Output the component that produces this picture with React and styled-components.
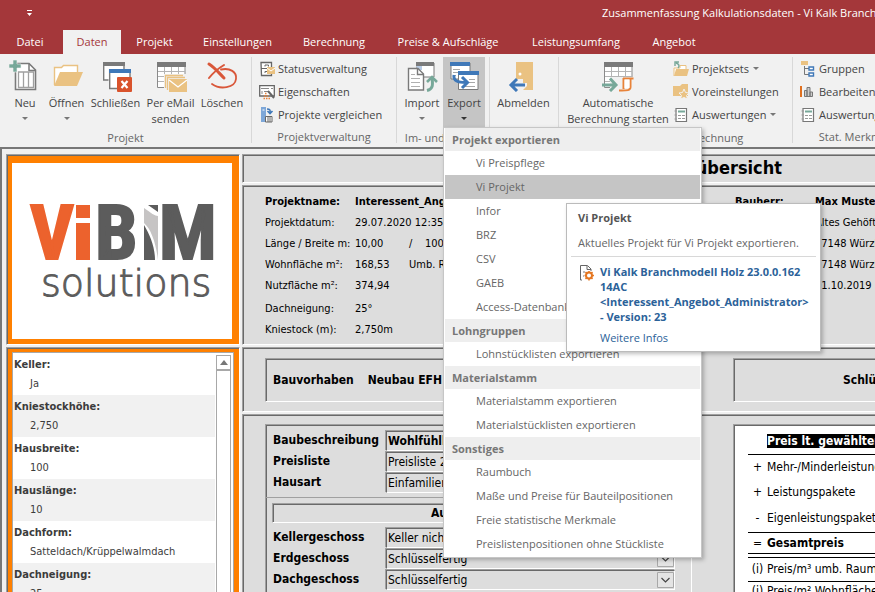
import React from 'react';
import styled, { createGlobalStyle, ThemeProvider } from 'styled-components';

const theme = {
	fonts: {
		ui: '"Open Sans", "Noto Sans", sans-serif',
		form: '"DejaVu Sans Condensed", "DejaVu Sans", sans-serif',
	},
	colors: {
		brand: '#a4373a',
		ribbon: '#f1f1f1',
		form: '#dddddd',
		orange: '#ff8000',
		text: '#444444',
		muted: '#666666',
		line: '#d8d8d8',
		hover: '#c5c5c5',
		link: '#2b6299',
		gray: '#7a7a7a',
		blue: '#3f78b8',
		sand: '#eac282',
		green: '#77a899',
	},
};

const { gray, blue, sand, green } = theme.colors;

const GlobalStyle = createGlobalStyle`
	* {
		box-sizing: border-box;
	}

	body {
		margin: 0;
	}

	button,
	input,
	select {
		font: inherit;
		color: inherit;
		margin: 0;
	}
`;

const Window = styled.div`
	display: flex;
	flex-direction: column;
	height: 100vh;
	overflow: hidden;
	font-family: ${(props) => props.theme.fonts.ui};
	font-size: 11px;
	line-height: 16px;
	color: ${(props) => props.theme.colors.text};
	background: #f0f0f0;
	white-space: nowrap;
`;

/* title bar and tabs */

const TitleBar = styled.header`
	display: flex;
	flex: none;
	align-items: center;
	height: 30px;
	padding: 0 0 4px 22px;
	color: #fff;
	background: ${(props) => props.theme.colors.brand};
`;

const QuickAccess = styled.button`
	display: flex;
	flex: none;
	width: 16px;
	padding: 4px;
	border: 0;
	background: none;
`;

const Title = styled.h1`
	margin: 0 0 0 564px;
	font-size: 11px;
	font-weight: 400;
`;

const Tabs = styled.nav`
	display: flex;
	flex: none;
	height: 24px;
	padding-left: 3px;
	background: ${(props) => props.theme.colors.brand};
`;

const Tab = styled.button`
	flex: none;
	width: ${(props) => props.$width}px;
	padding: 0;
	border: 0;
	color: ${(props) => (props.$active ? props.theme.colors.brand : '#fff')};
	background: ${(props) => (props.$active ? props.theme.colors.ribbon : 'none')};

	&:first-child {
		margin-right: 6px;
	}
`;

/* ribbon */

const Ribbon = styled.div`
	display: flex;
	flex: none;
	height: 93px;
	padding-top: 3px;
	background: ${(props) => props.theme.colors.ribbon};
`;

const Group = styled.section`
	display: flex;
	flex: none;
	flex-direction: column;
	width: ${(props) => props.$width}px;
	height: 86px;
	border-right: 1px solid ${(props) => props.theme.colors.line};
`;

const GroupBody = styled.div`
	display: flex;
	height: 70px;
	padding-left: ${(props) => props.$indent || 0}px;
`;

const Caption = styled.div`
	padding-top: 3px;
	text-align: center;
	color: ${(props) => props.theme.colors.muted};
`;

const BigButton = styled.button`
	display: flex;
	flex: none;
	flex-direction: column;
	align-items: center;
	width: ${(props) => props.$width}px;
	height: 70px;
	padding: 3px 0 0;
	border: 0;
	background: ${(props) => (props.$open ? props.theme.colors.hover : 'none')};

	svg {
		flex: none;
		margin-bottom: 3px;
	}
`;

const Caret = styled.span`
	width: 0;
	margin: ${(props) => (props.$inline ? '0 0 0 1px' : '6px 0 0')};
	border: 3px solid transparent;
	border-top-color: ${(props) => (props.$dark ? '#333' : '#777')};
	border-bottom: 0;
`;

const SmallColumn = styled.div`
	display: flex;
	flex-direction: column;
`;

const SmallButton = styled.button`
	display: flex;
	align-items: center;
	gap: 3px;
	height: 23px;
	padding: 0;
	border: 0;
	background: none;
`;

const MenuAnchor = styled.div`
	position: relative;
`;

const Menu = styled.div`
	position: absolute;
	z-index: 10;
	top: 70px;
	left: 0;
	width: 259px;
	padding: 0 1px 1px;
	border: 1px solid #c6c6c6;
	background: #fff;
	box-shadow: 2px 2px 4px rgba(0, 0, 0, 0.25);
`;

const MenuHeading = styled.div`
	height: 23px;
	padding-left: 7px;
	line-height: 23px;
	font-weight: 700;
	color: #777;
	background: #eee;
`;

const MenuItem = styled.button`
	display: block;
	width: 100%;
	height: 24px;
	padding: 0 0 0 31px;
	border: 0;
	text-align: left;
	color: ${(props) => props.theme.colors.muted};
	background: ${(props) => (props.$active ? props.theme.colors.hover : 'none')};
`;

const Tooltip = styled.div`
	position: absolute;
	z-index: 11;
	top: 75px;
	left: 122px;
	width: 255px;
	height: 149px;
	padding: 6px 4px;
	border: 1px solid #bbb;
	background: #fff;
	box-shadow: 2px 2px 4px rgba(0, 0, 0, 0.25);
	color: ${(props) => props.theme.colors.muted};
`;

const TooltipTitle = styled.strong`
	display: block;
	padding-left: 7px;
	color: #555;
`;

const TooltipText = styled.p`
	margin: 0;
	padding: 9px 0 5px 7px;
	border-bottom: 1px solid ${(props) => props.theme.colors.line};
`;

const TooltipSource = styled.div`
	display: flex;
	gap: 5px;
	padding: 7px 0 6px 7px;
	line-height: 15px;
	font-weight: 700;
	color: ${(props) => props.theme.colors.link};

	svg {
		flex: none;
	}
`;

const TooltipLink = styled.a`
	margin-left: 29px;
	color: ${(props) => props.theme.colors.link};
	text-decoration: none;
`;

/* form */

const Workspace = styled.main`
	display: flex;
	flex: 1;
	gap: 2px;
	min-width: 1160px;
	min-height: 0;
	padding: 5px 0 0 4px;
	border-top: 2px solid #777;
	border-left: 2px solid #777;
	font-family: ${(props) => props.theme.fonts.form};
	font-size: 12px;
	color: #000;
`;

const Column = styled.div`
	display: flex;
	flex: ${(props) => (props.$width ? 'none' : '1')};
	flex-direction: column;
	gap: 2px;
	width: ${(props) => (props.$width ? `${props.$width}px` : 'auto')};
`;

const Frame = styled.section`
	flex: ${(props) => (props.$fill ? '1 0 auto' : 'none')};
	border: 1px solid;
	border-color: #a0a0a0 #fff #fff #a0a0a0;
	background: ${(props) => props.theme.colors.form};
	box-shadow: inset 1px 1px #696969;
`;

const LogoFrame = styled(Frame)`
	height: 191px;
	padding: 8px 6px 5px 5px;
	background: ${(props) => props.theme.colors.orange};
	background-clip: padding-box;

	svg {
		display: block;
		background: #fff;
	}
`;

const ListFrame = styled(Frame)`
	height: 400px;
	padding: 4px 5px 0;
	background: ${(props) => props.theme.colors.orange};
`;

const ListBox = styled.div`
	display: flex;
	height: 100%;
	border: 1px solid #a8a8a8;
	background: #fff;
`;

const Facts = styled.dl`
	flex: 1;
	margin: 0;
	color: #3c3c3c;
`;

const Fact = styled.div`
	height: 42px;
	padding: 2px 1px;
	line-height: 19px;
	font-size: 11px;

	&:nth-child(even) {
		background: #f1f1f1;
	}

	dt {
		font-weight: 700;
	}

	dd {
		margin: 0 0 0 16px;
	}
`;

const ScrollTrack = styled.div`
	width: 15px;
	margin: 2px 2px 0 1px;
	border: 1px solid #a8a8a8;
`;

const ScrollUp = styled.button`
	display: flex;
	align-items: center;
	justify-content: center;
	width: 13px;
	height: 15px;
	padding: 0;
	border: 0;
	border-bottom: 2px solid #a8a8a8;
	background: #fff;
`;

const Headline = styled.h2`
	width: 539px;
	height: 27px;
	margin: 0;
	line-height: 26px;
	font-size: 18px;
	text-align: right;
`;

const ProjectInfo = styled(Frame)`
	display: grid;
	grid-template-columns: 470px 1fr;
	height: 160px;
	padding: 5px 0 0 22px;
`;

const InfoRows = styled.dl`
	margin: 0;
`;

const InfoRow = styled.div`
	display: grid;
	grid-template-columns: ${(props) => props.$label || 90}px 54px 1fr;
	margin-top: ${(props) => (props.$spaced ? 2 : 0)}px;
	line-height: 21px;
	font-size: 11px;
	font-weight: ${(props) => (props.$strong ? 700 : 400)};

	dd {
		margin: 0;
		white-space: pre;
	}
`;

const Split = styled(Frame)`
	display: grid;
	grid-template-columns: 427px 1fr;
	gap: 41px;
	padding: ${(props) => (props.$fill ? '9px 0 0 22px' : '10px 0 9px 22px')};
`;

const Banner = styled(Frame)`
	display: flex;
	align-items: center;
	gap: ${(props) => props.$gap || 0}px;
	height: 44px;
	padding-left: ${(props) => props.$indent || 7}px;
	font-weight: 700;
`;

const Details = styled(Frame)`
	padding-top: 5px;
`;

const Field = styled.div`
	display: grid;
	grid-template-columns: 113px 289px;
	align-items: center;
	height: 21px;
	margin: 0 7px;
`;

const FieldLabel = styled.label`
	font-weight: 700;
	line-height: 18px;
	padding-bottom: 2px;
`;

const fieldBox = (props) => `
	width: 100%;
	height: 20px;
	padding: 0 1px;
	border: 1px solid;
	border-color: #696969 #fff #fff #696969;
	border-radius: 0;
	outline: 0;
	background: ${props.theme.colors.form};
	box-shadow: -1px -1px #a0a0a0;
	font-size: 12px;
	font-weight: ${props.$strong ? 700 : 400};
`;

const TextField = styled.input`
	${fieldBox}
`;

const SelectBox = styled.div`
	display: grid;
	grid-template-columns: 1fr 18px;
	align-items: center;

	> * {
		grid-row: 1;
	}

	select {
		grid-column: 1 / 3;
	}

	svg {
		grid-column: 2;
		pointer-events: none;
	}
`;

const Select = styled.select`
	${fieldBox}
	appearance: none;
`;

const Rule = styled.hr`
	height: 1px;
	margin: 4px 0 5px;
	border: 0;
	background: #a0a0a0;
`;

const SubHeading = styled(Frame)`
	height: 20px;
	margin: 0 14px 4px 6px;
	padding-left: 158px;
	line-height: 18px;
	font-weight: 700;
`;

const PriceSheet = styled(Frame)`
	padding: 4px 0 0 14px;
	background: #fff;
`;

const PriceTable = styled.table`
	width: 100%;
	border-collapse: collapse;

	td {
		width: 19px;
		height: 25px;
		padding: 0;
		text-align: center;
	}

	th {
		padding: 0;
		text-align: left;
		font-weight: 400;
	}
`;

const PriceRow = styled.tr`
	border-bottom: ${(props) => (props.$line ? '1px solid #000' : '0')};

	&& th {
		font-weight: ${(props) => (props.$strong ? 700 : 400)};
	}

	&& td {
		height: ${(props) => props.$height || 25}px;
	}
`;

const Marked = styled.span`
	color: #fff;
	background: #000;
`;

/* icons */

const Icon = ({ size = 32, children }) => (
	<svg width={size} height={size} viewBox={`0 0 ${size} ${size}`} fill="none" aria-hidden="true">
		{children}
	</svg>
);

const NewIcon = () => (
	<Icon>
		<path d="M6.500 3.500H20L26.500 10V29.500H6.500Z" fill="#fff" stroke={gray} strokeWidth="1.6" />
		<path d="M20 3.500V10.500H26.500" stroke={gray} strokeWidth="1.500" />
		<path d="M9.500 12H24.500V27.500H9.500ZM14.500 12V27.500M19.500 12V27.500" stroke="#a0a0a0" strokeWidth="1.3" />
		<path d="M4 0H8V4H12V8H8V12H4V8H0V4H4Z" fill={green} stroke="#f1f1f1" strokeWidth=".6" />
	</Icon>
);

const OpenIcon = () => (
	<Icon>
		<path d="M3.500 25V7.500H10.500L12.500 5.500H26.500V14" fill="#fff" stroke={sand} strokeWidth="1.400" />
		<path d="M9 12H32L26 26H3Z" fill={sand} />
	</Icon>
);

const CloseIcon = () => (
	<Icon>
		<path d="M3.700 3V20H24V3" fill="#fff" stroke={gray} strokeWidth="1.400" />
		<path d="M3 2H25V6H3Z" fill={gray} />
		<path d="M8.500 9H31V29H8.500Z" fill="#f1f1f1" />
		<path d="M9.700 10V28.500H30V10" fill="#fff" stroke={gray} strokeWidth="1.400" />
		<path d="M9 9H31V13H9Z" fill={blue} />
		<rect x="17" y="17" width="15" height="15" rx="1" fill="#d9532c" />
		<path d="M21.500 21L27.500 28M27.500 21L21.500 28" stroke="#fff" strokeWidth="2.200" />
	</Icon>
);

const Sheet = () => (
	<>
		<path d="M2.500 5V27.500H30V5" fill="#fff" stroke="#8a8a8a" />
		<path d="M9.500 6V27M16.500 6V27M23.500 6V27M3 11.500H30M3 16.500H30M3 21.500H30" stroke="#b4b4b4" />
		<path d="M2 2H31V7H2Z" fill={gray} />
	</>
);

const MailIcon = () => (
	<Icon>
		<Sheet />
		<path d="M9 14H32V32H13V29H9Z" fill="#f1f1f1" />
		<path d="M10.500 28V15.500H28M12.500 30V17.500H30" stroke={sand} strokeWidth="1.300" />
		<path d="M14 19H32V32H14Z" fill={sand} />
		<path d="M14 20L23 27L32 20" stroke="#fff" strokeWidth="1.300" />
	</Icon>
);

const DeleteIcon = () => (
	<Icon>
		<path d="M3 4C8 7 13 13 18 18" stroke="#d9573a" strokeWidth="3" strokeLinecap="round" />
		<path d="M18 5C13 8 7 13 3 18" stroke="#d9573a" strokeWidth="2" strokeLinecap="round" />
		<path d="M15 9.500C24 7.500 31 12 30 19C29 28 14 30 6 24" stroke="#d9573a" strokeWidth="1.800" strokeLinecap="round" />
	</Icon>
);

const ImportIcon = () => (
	<Icon>
		<path d="M11 3H28V17H11Z" fill="#fff" stroke={gray} />
		<path d="M10 2H28V6H10Z" fill={gray} />
		<path d="M10 6H16V10H13Z" fill="#b8cbe4" />
		<path d="M2.500 8.500H12L17.500 14V30H2.500Z" fill="#fff" stroke={gray} strokeWidth="1.400" />
		<path d="M11.500 8.500V14.500H17.500" stroke={gray} strokeWidth="1.400" />
		<path d="M5 14.500H9M5 18.500H14M5 22.500H14M5 26.500H14" stroke="#b0b0b0" />
		<path d="M21 30.500C27 29 27 25 26 18" stroke={green} strokeWidth="3" />
		<path d="M21 22L26 17L31 22" stroke={green} strokeWidth="2.600" />
	</Icon>
);

const ExportIcon = () => (
	<Icon>
		<path d="M3 3H22V19H3Z" fill="#fff" stroke={gray} />
		<path d="M2 2H22V6H2Z" fill={blue} />
		<path d="M5 9.500H12M5 12.500H12M5 15.500H8" stroke="#a8a8a8" />
		<path d="M10.500 12V29.500H30V12" fill="#fff" stroke={gray} />
		<path d="M10 11H31V15H10Z" fill={blue} />
		<path d="M21 19.500H27M21 22.500H27M14 26.500H27" stroke="#a8a8a8" />
		<path d="M6 15C5 21 10 22.500 18 22.500" stroke={blue} strokeWidth="3" />
		<path d="M14 17L19.500 22.500L14 28" stroke={blue} strokeWidth="3" />
	</Icon>
);

const LogoutIcon = () => (
	<Icon>
		<path d="M8 2H25V30H15L19 26V23H15V19H8Z" fill={sand} />
		<circle cx="12" cy="14" r="1.500" fill="#fff" />
		<path d="M17 25H3M9 19L3 25L9 31" stroke={blue} strokeWidth="3" />
	</Icon>
);

const CalcIcon = () => (
	<Icon>
		<Sheet />
		<path d="M8 17H32V32H8Z" fill="#f1f1f1" />
		<path d="M0 25H13M8 18.500L14 25L8 31" stroke={green} strokeWidth="3" />
		<path d="M21 18.500H31.500M21.500 18V29M28.500 19V27C28.500 31 24 30.500 17 30.500" stroke="#e8833a" strokeWidth="2" />
		<path d="M22.500 19.500H27.500V28H22.500Z" fill="#fff" />
	</Icon>
);

const StatusIcon = () => (
	<Icon size={16}>
		<path d="M2 1.500H12.500V14.500H2.500Z" fill="#fff" stroke="#666" strokeWidth="1.300" />
		<path d="M2 7.500H13M6 5.500V4H9.500V5.500M6 12V10.500H9.500V12" stroke="#666" />
		<path d="M8 6H16V13H8Z" fill={sand} />
		<path d="M8 7L12 10L16 7" stroke="#fff" />
	</Icon>
);

const PropertiesIcon = () => (
	<Icon size={16}>
		<path d="M.7 1.700H15.300V12H.7Z" fill="#fff" stroke="#666" strokeWidth="1.300" />
		<path d="M2 4.500H10M12 4.500H14M3 7V10M5 7.500H9" stroke="#888" />
		<path d="M9 7L15 14" stroke="#666" strokeWidth="2" />
		<path d="M6 9.500H8M5 12H10M4.500 14.500H11" stroke="#e8833a" strokeWidth="1.500" strokeDasharray="1.500 1" />
	</Icon>
);

const CompareIcon = () => (
	<Icon size={16}>
		<path d="M2 0H7V15H2Z" fill="#7da7d8" />
		<path d="M3.500 3H5.500" stroke="#fff" />
		<path d="M8 2C12 2 11 4 11 6M8.500 4L11 6.500L13.500 4" stroke={blue} strokeWidth="1.600" />
		<path d="M6.500 9.500H13V15H6.500ZM9 10V15M11 10V15" fill="#fff" stroke="#666" />
	</Icon>
);

const SetsIcon = () => (
	<Icon size={16}>
		<path d="M1 15V7H7V4.500H13V8" fill="#fff" stroke={sand} />
		<path d="M3 8H16L14 15H1Z" fill={sand} />
		<path d="M5 7C7 5 6 3 3 2M6 1H2V5" stroke={green} strokeWidth="1.400" />
	</Icon>
);

const PresetIcon = () => (
	<Icon size={16}>
		<path d="M0 2H7L9 0H15V12H0Z" fill={sand} />
		<path d="M11 5L12.500 8.500L16 9L13.500 11.500L14.500 15L11 13.500L7.500 15L8.500 11.500L6 9L9.500 8.500Z" fill={sand} stroke="#f1f1f1" />
	</Icon>
);

const ReportIcon = () => (
	<Icon size={16}>
		<path d="M3 1.500H13.500V14.500H3Z" fill="#fff" stroke="#777" strokeWidth="1.200" />
		<path d="M5 4.500H12" stroke={green} strokeWidth="2" />
		<path d="M5 8.500H8M9 8.500H12M5 11.500H8M9 11.500H12M1.500 4H4M1.500 8H4M1.500 12H4" stroke="#999" />
	</Icon>
);

const GroupsIcon = () => (
	<Icon size={16}>
		<path d="M1 0H8V4H1Z" fill={sand} />
		<path d="M4.500 5V13.500H9M5 7.500H9" stroke="#777" />
		<path d="M9 6H13.500V9H9ZM9 12H13.500V15H9Z" fill="#fff" stroke={blue} strokeWidth="1.400" />
	</Icon>
);

const EditIcon = () => (
	<Icon size={16}>
		<path d="M1 2V13" stroke="#e07020" strokeWidth="2" />
		<path d="M4.500 6.500H7V12.500H4.500ZM7 3.500H10V12.500H7ZM10 8H12.500V12.500H10Z" fill="#ccc" stroke="#777" />
	</Icon>
);

const SourceIcon = () => (
	<Icon size={17}>
		<path d="M4 16H2.500V1.500H9.500L13 5V7M9 2V5.500H13" stroke="#666" />
		<path d="M5 8H7M5 12H6" stroke="#777" />
		<circle cx="11" cy="11.500" r="3" stroke="#e57722" strokeWidth="2" />
		<path d="M11 7V9M11 14V16.500M6.500 11.500H8M14 11.500H16M7.500 8L9 9.500M13 13.500L14.500 15M14.500 8L13 9.500M9 13.500L7.500 15" stroke="#e57722" strokeWidth="1.500" />
	</Icon>
);

const Chevron = () => (
	<svg width="17" height="16" viewBox="0 0 17 16" fill="none" aria-hidden="true">
		<path d="M.5 .5H16.500V15.500H.5Z" fill="#e4e4e4" stroke="#a8a8a8" />
		<path d="M4.500 6L8.500 10L12.500 6" stroke="#444" strokeWidth="1.200" />
	</svg>
);

const Logo = () => (
	<svg width="220" height="176" viewBox="0 0 220 176" role="img" aria-label="ViBIM solutions">
		<g fontFamily='"Roboto Condensed", Roboto, sans-serif' fontWeight="700" fontSize="76" strokeWidth="2">
			<text y="96" fill="#ec622d" stroke="#ec622d">
				<tspan x="18">V</tspan>
			</text>
			<text y="96" fill="#5c5c5c" stroke="#5c5c5c">
				<tspan x="83">B</tspan>
				<tspan x="147">M</tspan>
			</text>
		</g>
		<path d="M64 42H78V55H64ZM64 60H78V97H64Z" fill="#ec622d" />
		<path d="M132 45C139 50 143 53 146 53V97C144 80 139 66 132 60Z" fill="#c6c4c4" />
		<path d="M132 62C138 72 143 84 143 97H132ZM136 42H146V49Z" fill="#5c5c5c" />
		<text x="29" y="133" fill="#5c5c5c" stroke="#5c5c5c" strokeWidth="1" fontFamily='"DejaVu Sans Light", "DejaVu Sans", sans-serif' fontWeight="200" fontSize="38">
			solutions
		</text>
	</svg>
);

/* data */

const tabs = [
	['Datei', 54],
	['Daten', 58],
	['Projekt', 67],
	['Einstellungen', 99],
	['Berechnung', 94],
	['Preise & Aufschläge', 134],
	['Leistungsumfang', 122],
	['Angebot', 74],
];

const menu = [
	{ heading: 'Projekt exportieren', items: ['Vi Preispflege', 'Vi Projekt', 'Infor', 'BRZ', 'CSV', 'GAEB', 'Access-Datenbank'] },
	{ heading: 'Lohngruppen', items: ['Lohnstücklisten exportieren'] },
	{ heading: 'Materialstamm', items: ['Materialstamm exportieren', 'Materialstücklisten exportieren'] },
	{
		heading: 'Sonstiges',
		items: ['Raumbuch', 'Maße und Preise für Bauteilpositionen', 'Freie statistische Merkmale', 'Preislistenpositionen ohne Stückliste'],
	},
];

const facts = [
	['Keller:', 'Ja'],
	['Kniestockhöhe:', '2,750'],
	['Hausbreite:', '100'],
	['Hauslänge:', '10'],
	['Dachform:', 'Satteldach/Krüppelwalmdach'],
	['Dachneigung:', '25'],
];

const info = [
	{ label: 'Projektdatum:', value: '29.07.2020 12:35:10' },
	{ label: 'Länge / Breite m:', value: '10,00', extra: '/    100,00' },
	{ label: 'Wohnfläche m²:', value: '168,53', extra: 'Umb. Raum' },
	{ label: 'Nutzfläche m²:', value: '374,94' },
	{ label: 'Dachneigung:', value: '25°', spaced: true },
	{ label: 'Kniestock (m):', value: '2,750m' },
];

const client = ['Altes Gehöft 12', '97148 Würzburg', '97148 Würzburg', '01.10.2019'];

const floors = [
	['Kellergeschoss', 'Keller nicht ausgebaut'],
	['Erdgeschoss', 'Schlüsselfertig'],
	['Dachgeschoss', 'Schlüsselfertig'],
];

const prices = [
	{ sign: '+', label: 'Mehr-/Minderleistungen' },
	{ sign: '+', label: 'Leistungspakete' },
	{ sign: '-', label: 'Eigenleistungspakete', line: true, height: 28 },
	{ sign: '=', label: 'Gesamtpreis', strong: true, line: true, height: 21 },
	{ sign: '', label: '', line: true, height: 4 },
	{ sign: '(i)', label: 'Preis/m³ umb. Raum', line: true, height: 24 },
	{ sign: '(i)', label: 'Preis/m² Wohnfläche', line: true, height: 20 },
];

const ExportMenu = () => (
	<Menu role="menu">
		{menu.map((group) => (
			<React.Fragment key={group.heading}>
				<MenuHeading>{group.heading}</MenuHeading>
				{group.items.map((item) => (
					<MenuItem key={item} role="menuitem" $active={item === 'Vi Projekt'}>
						{item}
					</MenuItem>
				))}
			</React.Fragment>
		))}
		<Tooltip role="tooltip">
			<TooltipTitle>Vi Projekt</TooltipTitle>
			<TooltipText>Aktuelles Projekt für Vi Projekt exportieren.</TooltipText>
			<TooltipSource>
				<SourceIcon />
				<span>
					Vi Kalk Branchmodell Holz 23.0.0.162
					<br />
					14AC
					<br />
					&lt;Interessent_Angebot_Administrator&gt;
					<br />- Version: 23
				</span>
			</TooltipSource>
			<TooltipLink href="#infos">Weitere Infos</TooltipLink>
		</Tooltip>
	</Menu>
);

const RibbonBar = () => (
	<Ribbon>
		<Group $width={252}>
			<GroupBody $indent={5}>
				<BigButton $width={40}><NewIcon />Neu<Caret /></BigButton>
				<BigButton $width={43}><OpenIcon />Öffnen<Caret /></BigButton>
				<BigButton $width={55}><CloseIcon />Schließen</BigButton>
				<BigButton $width={55}><MailIcon />Per eMail<br />senden</BigButton>
				<BigButton $width={48}><DeleteIcon />Löschen</BigButton>
			</GroupBody>
			<Caption>Projekt</Caption>
		</Group>
		<Group $width={145}>
			<GroupBody $indent={7}>
				<SmallColumn>
					<SmallButton><StatusIcon />Statusverwaltung</SmallButton>
					<SmallButton><PropertiesIcon />Eigenschaften</SmallButton>
					<SmallButton><CompareIcon />Projekte vergleichen</SmallButton>
				</SmallColumn>
			</GroupBody>
			<Caption>Projektverwaltung</Caption>
		</Group>
		<Group $width={93}>
			<GroupBody $indent={4}>
				<BigButton $width={42}><ImportIcon />Import<Caret /></BigButton>
				<MenuAnchor>
					<BigButton $width={42} $open aria-expanded="true"><ExportIcon />Export<Caret $dark /></BigButton>
					<ExportMenu />
				</MenuAnchor>
			</GroupBody>
			<Caption>Im- und Export</Caption>
		</Group>
		<Group $width={69}>
			<BigButton $width={67}><LogoutIcon />Abmelden</BigButton>
		</Group>
		<Group $width={234}>
			<GroupBody $indent={4}>
				<BigButton $width={110}><CalcIcon />Automatische<br />Berechnung starten</BigButton>
				<SmallColumn>
					<SmallButton><SetsIcon />Projektsets<Caret $inline /></SmallButton>
					<SmallButton><PresetIcon />Voreinstellungen</SmallButton>
					<SmallButton><ReportIcon />Auswertungen<Caret $inline /></SmallButton>
				</SmallColumn>
			</GroupBody>
			<Caption>Automatische Berechnung</Caption>
		</Group>
		<Group $width={130}>
			<GroupBody $indent={7}>
				<SmallColumn>
					<SmallButton><GroupsIcon />Gruppen</SmallButton>
					<SmallButton><EditIcon />Bearbeiten</SmallButton>
					<SmallButton><ReportIcon />Auswertungen</SmallButton>
				</SmallColumn>
			</GroupBody>
			<Caption>Stat. Merkmale</Caption>
		</Group>
	</Ribbon>
);

const Sidebar = () => (
	<Column $width={234}>
		<LogoFrame>
			<Logo />
		</LogoFrame>
		<ListFrame>
			<ListBox>
				<Facts>
					{facts.map(([label, value]) => (
						<Fact key={label}>
							<dt>{label}</dt>
							<dd>{value}</dd>
						</Fact>
					))}
				</Facts>
				<ScrollTrack>
					<ScrollUp aria-label="Nach oben">
						<svg width="8" height="5" viewBox="0 0 8 5">
							<path d="M0 5L4 0L8 5Z" fill="#777" />
						</svg>
					</ScrollUp>
				</ScrollTrack>
			</ListBox>
		</ListFrame>
	</Column>
);

const ProjectForm = () => (
	<Column>
		<Frame>
			<Headline>Projektübersicht</Headline>
		</Frame>
		<ProjectInfo>
			<InfoRows>
				<InfoRow $strong>
					<dt>Projektname:</dt>
					<dd>Interessent_Angebot</dd>
				</InfoRow>
				{info.map((row) => (
					<InfoRow key={row.label} $spaced={row.spaced}>
						<dt>{row.label}</dt>
						<dd>{row.value}</dd>
						<dd>{row.extra}</dd>
					</InfoRow>
				))}
			</InfoRows>
			<InfoRows>
				<InfoRow $strong $label={80}>
					<dt>Bauherr:</dt>
					<dd>Max Mustermann</dd>
				</InfoRow>
				{client.map((line, index) => (
					<InfoRow key={index} $label={80}>
						<dt />
						<dd>{line}</dd>
					</InfoRow>
				))}
			</InfoRows>
		</ProjectInfo>
		<Split>
			<Banner $gap={14}>
				<span>Bauvorhaben</span>
				<span>Neubau EFH</span>
			</Banner>
			<Banner $indent={109}>Schlüsselfertig</Banner>
		</Split>
		<Split $fill>
			<Details>
				<Field>
					<FieldLabel htmlFor="description">Baubeschreibung</FieldLabel>
					<TextField id="description" $strong defaultValue="Wohlfühlhaus" />
				</Field>
				<Field>
					<FieldLabel htmlFor="pricelist">Preisliste</FieldLabel>
					<TextField id="pricelist" defaultValue="Preisliste 2020" />
				</Field>
				<Field>
					<FieldLabel htmlFor="housetype">Hausart</FieldLabel>
					<TextField id="housetype" defaultValue="Einfamilienhaus" />
				</Field>
				<Rule />
				<SubHeading>Ausbaustufe</SubHeading>
				{floors.map(([label, value]) => (
					<Field key={label}>
						<FieldLabel htmlFor={label}>{label}</FieldLabel>
						<SelectBox>
							<Select id={label}>
								<option>{value}</option>
							</Select>
							<Chevron />
						</SelectBox>
					</Field>
				))}
			</Details>
			<PriceSheet>
				<PriceTable>
					<tbody>
						<PriceRow $strong $line>
							<td />
							<th scope="row"><Marked>Preis lt. gewählter Ausstattung</Marked></th>
						</PriceRow>
						{prices.map((row, index) => (
							<PriceRow key={index} $strong={row.strong} $line={row.line} $height={row.height}>
								<td>{row.sign}</td>
								<th scope="row">{row.label}</th>
							</PriceRow>
						))}
					</tbody>
				</PriceTable>
			</PriceSheet>
		</Split>
	</Column>
);

const App = () => {
	return (
		<ThemeProvider theme={theme}>
			<GlobalStyle />
			<Window>
				<TitleBar>
					<QuickAccess aria-label="Schnellzugriff anpassen">
						<svg width="7" height="6" viewBox="0 0 7 6">
							<path d="M1 0H6V1H1ZM1 3H6L3.500 6Z" fill="#fff" />
						</svg>
					</QuickAccess>
					<Title>Zusammenfassung Kalkulationsdaten - Vi Kalk Branchmodell Holz</Title>
				</TitleBar>
				<Tabs>
					{tabs.map(([label, width]) => (
						<Tab key={label} $width={width} $active={label === 'Daten'}>
							{label}
						</Tab>
					))}
				</Tabs>
				<RibbonBar />
				<Workspace>
					<Sidebar />
					<ProjectForm />
				</Workspace>
			</Window>
		</ThemeProvider>
	);
};

export default App;
